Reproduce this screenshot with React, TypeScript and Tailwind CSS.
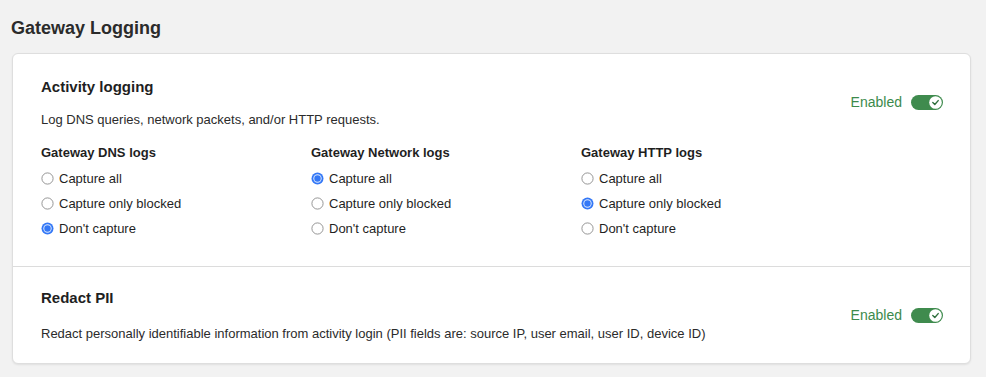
import React from "react";

type Choice = "all" | "blocked" | "none";

const options: { value: Choice; label: string }[] = [
  { value: "all", label: "Capture all" },
  { value: "blocked", label: "Capture only blocked" },
  { value: "none", label: "Don't capture" },
];

function Radio({ checked }: { checked: boolean }) {
  return checked ? (
    <svg width="13" height="13" viewBox="0 0 13 13" className="shrink-0">
      <circle cx="6.5" cy="6.5" r="6" fill="#3478f6" />
      <circle cx="6.5" cy="6.5" r="4.2" fill="#dce8fd" />
      <circle cx="6.5" cy="6.5" r="3.2" fill="#3478f6" />
    </svg>
  ) : (
    <svg width="13" height="13" viewBox="0 0 13 13" className="shrink-0">
      <circle cx="6.5" cy="6.5" r="5.6" fill="#fff" stroke="#8a8a8a" strokeWidth="0.9" />
    </svg>
  );
}

function Toggle() {
  return (
    <div className="flex items-center gap-[9px]">
      <span className="text-[14px] text-[#3c8a4c]">Enabled</span>
      <svg width="32" height="15" viewBox="0 0 32 15">
        <rect x="0" y="0" width="32" height="15" rx="7.5" fill="#3f8b4e" />
        <circle cx="24.5" cy="7.5" r="6.3" fill="#fff" />
        <path d="M21.8 7.6 L23.8 9.5 L27.2 5.6" fill="none" stroke="#2f6f3d" strokeWidth="1.4" strokeLinecap="round" strokeLinejoin="round" />
      </svg>
    </div>
  );
}

function LogColumn({ title, initial }: { title: string; initial: Choice }) {
  const [value, setValue] = React.useState<Choice>(initial);
  return (
    <div className="w-[270px]">
      <p className="h-[16px] text-[13px] leading-[16px] font-bold text-[#1f1f1f]">{title}</p>
      <div className="mt-[5px] flex flex-col">
        {options.map((o) => (
          <label
            key={o.value}
            onClick={() => setValue(o.value)}
            className="flex h-[25px] items-center gap-[5px] cursor-pointer"
          >
            <Radio checked={value === o.value} />
            <span className="text-[13px] text-[#1f1f1f]">{o.label}</span>
          </label>
        ))}
      </div>
    </div>
  );
}

export default function App() {
  return (
    <div
      className="min-h-[377px] w-full bg-[#f2f2f2] pt-[14px] pl-[12px] pr-[15px] pb-[15px]"
      style={{ fontFamily: '"Liberation Sans", Arial, sans-serif' }}
    >
      <h1 className="-ml-[1px] text-[18px] leading-[28px] font-bold text-[#2b2b2b]">Gateway Logging</h1>
      <div className="mt-[11px] rounded-[6px] border border-[#dedede] bg-white shadow-[0_1px_2px_rgba(0,0,0,0.08)]">
        <section className="border-b border-[#dcdcdc] pl-[28px] pr-[27px] pt-[23px] pb-[25px]">
          <div className="flex items-center justify-between">
            <div>
              <h2 className="text-[15px] leading-[20px] font-bold text-[#1f1f1f]">Activity logging</h2>
              <p className="mt-[15px] text-[13px] leading-[16px] text-[#2b2b2b]">
                Log DNS queries, network packets, and/or HTTP requests.
              </p>
            </div>
            <Toggle />
          </div>
          <div className="mt-[17px] flex">
            <LogColumn title="Gateway DNS logs" initial="none" />
            <LogColumn title="Gateway Network logs" initial="all" />
            <LogColumn title="Gateway HTTP logs" initial="blocked" />
          </div>
        </section>
        <section className="flex items-center justify-between pl-[28px] pr-[27px] pt-[21px] pb-[21px]">
          <div>
            <h2 className="text-[15px] leading-[20px] font-bold text-[#1f1f1f]">Redact PII</h2>
            <p className="mt-[18px] text-[13px] leading-[16px] text-[#2b2b2b]">
              Redact personally identifiable information from activity login (PII fields are: source IP, user email, user ID, device ID)
            </p>
          </div>
          <Toggle />
        </section>
      </div>
    </div>
  );
}
